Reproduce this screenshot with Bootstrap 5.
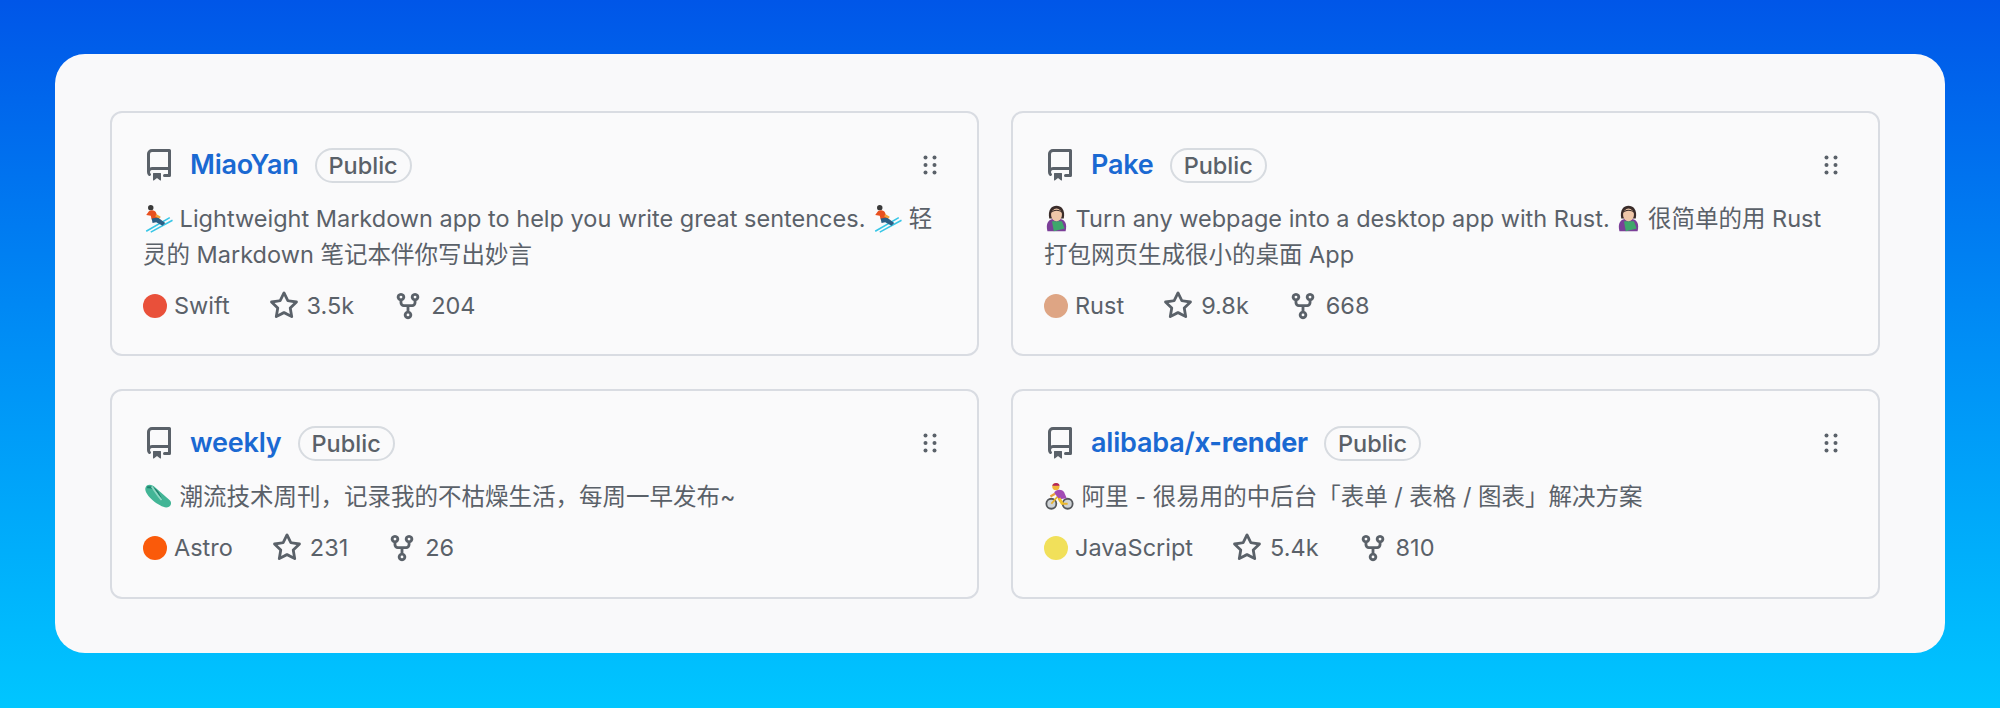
<!doctype html>
<html lang="zh">

<head>
  <meta charset="utf-8" />
  <title>Pinned repositories</title>
  <link href="https://cdn.jsdelivr.net/npm/bootstrap@5.3.3/dist/css/bootstrap.min.css" rel="stylesheet" />
  <style>
    html, body { height: 708px; overflow: hidden; }
    body {
      background: linear-gradient(180deg, #0056e8 0%, #0090f6 50%, #00c6ff 100%);
      padding: 54px 55px 55px;
      font-family: Inter, "Noto Sans CJK SC", sans-serif;
      color: #5a6169;
    }
    .sheet { background: #f9f9fa; border-radius: 30px; height: 599px; padding: 57px 65px 55px 55px; }
    .pin-grid { --bs-gutter-x: 32px; --bs-gutter-y: 33px; }
    .pin { background: #fafafb; border: 2px solid #d9dce2; border-radius: 12px; padding: 33px 31px 31px 31px; }
    .pin-top { height: 245px; }
    .pin-low { height: 210px; }
    .pin-head { height: 38px; }
    .pin-name { color: #1a69d2; font-size: 27px; font-weight: 600; text-decoration: none; margin-left: 15px; letter-spacing: -.2px; }
    .vis { border: 2px solid #d7dbe0; border-radius: 20px; color: #5a6169; font-size: 23.5px; font-weight: 500; line-height: 31px; padding: 0 12px; margin-left: 16px; }
    .grip { color: #5a6169; }
    .pin-desc { font-size: 23.5px; line-height: 36px; margin-top: 17px; height: 36px; }
    .pin-top .pin-desc { height: 72px; }
    .pin-stats { font-size: 23.5px; height: 36px; margin-top: 15px; gap: 39px; }
    .stat { gap: 8px; }
    .lang-dot { width: 24px; height: 24px; border-radius: 50%; margin-right: -1px; }
    .emo { height: 29px; vertical-align: -6px; }
  </style>
</head>

<body>
  <svg width="0" height="0" class="position-absolute">
    <symbol id="i-repo" viewBox="0 0 16 16"><path fill="currentColor" d="M2 2.5A2.5 2.5 0 0 1 4.5 0h8.75a.75.75 0 0 1 .75.75v12.5a.75.75 0 0 1-.75.75h-2.5a.75.75 0 0 1 0-1.5h1.75v-2h-8a1 1 0 0 0-.714 1.7.75.75 0 1 1-1.072 1.05A2.495 2.495 0 0 1 2 11.5Zm10.5-1h-8a1 1 0 0 0-1 1v6.708A2.486 2.486 0 0 1 4.5 9h8ZM5 12.25a.25.25 0 0 1 .25-.25h3.5a.25.25 0 0 1 .25.25v3.25a.25.25 0 0 1-.4.2l-1.45-1.087a.249.249 0 0 0-.3 0L5.4 15.7a.25.25 0 0 1-.4-.2Z"/></symbol>
    <symbol id="i-star" viewBox="0 0 16 16"><path fill="currentColor" d="M8 .25a.75.75 0 0 1 .673.418l1.882 3.815 4.21.612a.75.75 0 0 1 .416 1.279l-3.046 2.97.719 4.192a.751.751 0 0 1-1.088.791L8 12.347l-3.766 1.98a.75.75 0 0 1-1.088-.79l.72-4.194L.818 6.374a.75.75 0 0 1 .416-1.28l4.21-.611L7.327.668A.75.75 0 0 1 8 .25Zm0 2.445L6.615 5.5a.75.75 0 0 1-.564.41l-3.097.45 2.24 2.184a.75.75 0 0 1 .216.664l-.528 3.084 2.769-1.456a.75.75 0 0 1 .698 0l2.77 1.456-.53-3.084a.75.75 0 0 1 .216-.664l2.24-2.183-3.096-.45a.75.75 0 0 1-.564-.41L8 2.694Z"/></symbol>
    <symbol id="i-fork" viewBox="0 0 16 16"><path fill="currentColor" d="M5 5.372v.878c0 .414.336.75.75.75h4.5a.75.75 0 0 0 .75-.75v-.878a2.25 2.25 0 1 1 1.5 0v.878a2.25 2.25 0 0 1-2.25 2.25h-1.5v2.128a2.251 2.251 0 1 1-1.5 0V8.5h-1.5A2.25 2.25 0 0 1 3.5 6.25v-.878a2.25 2.25 0 1 1 1.5 0ZM5 3.25a.75.75 0 1 0-1.5 0 .75.75 0 0 0 1.5 0Zm6.75.75a.75.75 0 1 0 0-1.5.75.75 0 0 0 0 1.5Zm-3 8.75a.75.75 0 1 0-1.5 0 .75.75 0 0 0 1.5 0Z"/></symbol>
    <symbol id="i-grip" viewBox="0 0 32 32"><g fill="currentColor"><circle cx="11.5" cy="8.5" r="2"/><circle cx="20.5" cy="8.5" r="2"/><circle cx="11.5" cy="16" r="2"/><circle cx="20.5" cy="16" r="2"/><circle cx="11.5" cy="23.5" r="2"/><circle cx="20.5" cy="23.5" r="2"/></g></symbol>
    <symbol id="e-ski" viewBox="0 0 32 32">
      <path d="M3 30 29 15M8 31l24-13" stroke="#37c6e6" stroke-width="1.8" fill="none"/>
      <circle cx="8" cy="4" r="3" fill="#3a3a3a"/>
      <path d="M6 8c3-2 7-1 8 2l2 6-7 1-1-4-5-1z" fill="#e8501f"/>
      <path d="M9 16l7-1 8 6-3 3-7-4-4 1z" fill="#2b5f86"/>
      <path d="M14 11l5 3-1 2-5-2z" fill="#f2a33a"/>
    </symbol>
    <symbol id="e-dev" viewBox="0 0 26 32">
      <path d="M3 30c-2-8 0-14 10-14s12 6 10 14z" fill="#7b3f98"/>
      <path d="M8 19h11l3 8-12 3z" fill="#3fa66b"/>
      <path d="M5 16C3 6 8 2 13 2s10 4 8 14z" fill="#3a2c2a"/>
      <ellipse cx="13" cy="12" rx="6" ry="7" fill="#efc7a9"/>
      <path d="M7 10c2-3 9-4 12 0-1-5-11-5-12 0z" fill="#3a2c2a"/>
    </symbol>
    <symbol id="e-flop" viewBox="0 0 32 32">
      <path d="M2 7C3 2 9 2 13 6l16 14c3 3 1 8-4 8C18 28 1 15 2 7z" fill="#42b596"/>
      <path d="M4 6c5-1 9 2 12 6l4 8" stroke="#1f7f6c" stroke-width="2" fill="none"/>
      <path d="M9 5c3 4 5 8 11 15" stroke="#8fd9c4" stroke-width="2" fill="none"/>
    </symbol>
    <symbol id="e-bike" viewBox="0 0 32 32">
      <circle cx="7" cy="24" r="5.5" fill="#cfd3d6" stroke="#55585c" stroke-width="2"/>
      <circle cx="25" cy="24" r="5.5" fill="#cfd3d6" stroke="#55585c" stroke-width="2"/>
      <path d="M7 24l7-8 5 8h6" stroke="#e8b32c" stroke-width="2" fill="none"/>
      <path d="M10 12c2-4 8-5 11-1l3 7-8 1z" fill="#a24bb4"/>
      <path d="M17 17l4 7-3 1-4-6z" fill="#efc12f"/>
      <circle cx="12" cy="5" r="4" fill="#f1b53a"/>
      <path d="M8 4c1-4 8-4 8 0z" fill="#b2245c"/>
      <path d="M11 13l-5 3" stroke="#e9a13a" stroke-width="2.4"/>
    </symbol>
  </svg>

  <div class="sheet">
    <div class="row pin-grid" id="pins"></div>
  </div>

  <script>
    const emo = (id, w) => `<svg class="emo" width="${w}"><use href="#${id}"/></svg>`;

    const pins = [
      { name: "MiaoYan", rowCls: "pin-top", desc: `${emo("e-ski", 30)} Lightweight Markdown app to help you write great sentences. ${emo("e-ski", 30)} 轻灵的 Markdown 笔记本伴你写出妙言`, lang: "Swift", color: "#e9503a", stars: "3.5k", forks: "204" },
      { name: "Pake", rowCls: "pin-top", desc: `${emo("e-dev", 25)} Turn any webpage into a desktop app with Rust. ${emo("e-dev", 25)} 很简单的用 Rust 打包网页生成很小的桌面 App`, lang: "Rust", color: "#dea584", stars: "9.8k", forks: "668" },
      { name: "weekly", rowCls: "pin-low", desc: `${emo("e-flop", 30)} 潮流技术周刊，记录我的不枯燥生活，每周一早发布~`, lang: "Astro", color: "#fa5a0a", stars: "231", forks: "26" },
      { name: "alibaba/<b class=\"fw-bold\">x-render</b>", rowCls: "pin-low", desc: `${emo("e-bike", 31)} 阿里 - 很易用的中后台「表单 / 表格 / 图表」解决方案`, lang: "JavaScript", color: "#f1e05a", stars: "5.4k", forks: "810" },
    ];

    let html = "";
    pins.forEach((p) => {
      html += `
        <div class="col-6">
          <div class="pin ${p.rowCls}">
            <div class="pin-head d-flex align-items-center">
              <svg width="32" height="32"><use href="#i-repo"/></svg>
              <a class="pin-name" href="#">${p.name}</a>
              <span class="vis">Public</span>
              <svg class="grip ms-auto" width="32" height="32"><use href="#i-grip"/></svg>
            </div>
            <div class="pin-desc">${p.desc}</div>
            <div class="pin-stats d-flex align-items-center">
              <span class="stat d-flex align-items-center"><span class="lang-dot" style="background:${p.color}"></span>${p.lang}</span>
              <span class="stat d-flex align-items-center"><svg width="30" height="30"><use href="#i-star"/></svg>${p.stars}</span>
              <span class="stat d-flex align-items-center"><svg width="30" height="30"><use href="#i-fork"/></svg>${p.forks}</span>
            </div>
          </div>
        </div>`;
    });
    document.getElementById("pins").innerHTML = html;
  </script>
  <script src="https://cdn.jsdelivr.net/npm/bootstrap@5.3.3/dist/js/bootstrap.bundle.min.js"></script>
</body>

</html>
